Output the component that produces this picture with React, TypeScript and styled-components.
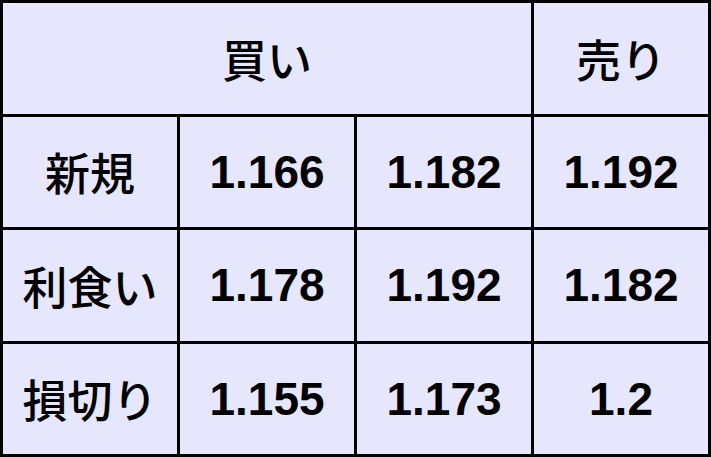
import styled, { createGlobalStyle } from 'styled-components';

const GlobalStyle = createGlobalStyle`
  html, body {
    margin: 0;
    padding: 0;
    background: #ffffff;
  }
`;

const Board = styled.div`
  width: 711px;
  height: 457px;
  box-sizing: border-box;
  padding: 3px;
  background: #000000;
  display: grid;
  grid-template-columns: repeat(4, 1fr);
  grid-template-rows: repeat(4, 1fr);
  gap: 3px;
`;

const Cell = styled.div<{ $span?: number }>`
  grid-column: span ${({ $span }) => $span ?? 1};
  background: #e6e6fc;
  display: flex;
  align-items: center;
  justify-content: center;
  font-family: 'Liberation Sans', 'Noto Sans CJK JP', sans-serif;
  font-weight: 700;
  font-size: 46px;
  color: #000000;
`;

const Label = styled(Cell)`
  font-family: 'Noto Sans CJK JP', sans-serif;
  font-weight: 500;
  font-size: 45px;
`;

const rows: { label: string; values: string[] }[] = [
  { label: '新規', values: ['1.166', '1.182', '1.192'] },
  { label: '利食い', values: ['1.178', '1.192', '1.182'] },
  { label: '損切り', values: ['1.155', '1.173', '1.2'] },
];

export default function App() {
  return (
    <>
      <GlobalStyle />
      <Board>
        <Label $span={3}>買い</Label>
        <Label>売り</Label>
        {rows.map((row) => [
          <Label key={row.label}>{row.label}</Label>,
          ...row.values.map((v, i) => <Cell key={row.label + i}>{v}</Cell>),
        ])}
      </Board>
    </>
  );
}
